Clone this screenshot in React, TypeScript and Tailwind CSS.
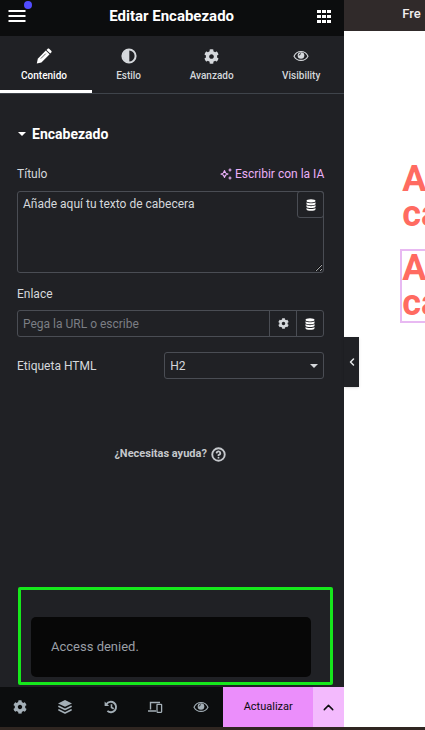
import React from 'react';
import { FaCog } from 'react-icons/fa';
import { ChevronLeft, ChevronUp, CircleHelp } from 'lucide-react';

interface IconProps {
  className?: string;
}

const DatabaseIcon: React.FC<IconProps> = ({ className }) => (
  <svg viewBox="0 0 10 12" className={className} fill="currentColor" aria-hidden="true">
    <ellipse cx="5" cy="1.8" rx="4.5" ry="1.6" />
    <path d="M.5 3.3c1.4 1.4 7.6 1.4 9 0v1.9c-1.4 1.3-7.6 1.3-9 0z" />
    <path d="M.5 6.1c1.4 1.4 7.6 1.4 9 0V8c-1.4 1.3-7.6 1.3-9 0z" />
    <path d="M.5 8.900c1.4 1.4 7.6 1.4 9 0v1.4c0 2-9 2-9 0z" />
  </svg>
);

const EyeIcon: React.FC<IconProps> = ({ className }) => (
  <svg viewBox="0 0 16 12" className={className} fill="none" stroke="currentColor" aria-hidden="true">
    <path d="M1 6.200C4 0 12 0 15 6.200 12 11.800 4 11.800 1 6.200z" strokeWidth="1.1" />
    <circle cx="8" cy="5.500" r="3.300" fill="currentColor" stroke="none" />
    <path d="M6.200 5.500A1.900 1.900 0 0 1 8 3.700" stroke="#202125" strokeWidth=".9" />
  </svg>
);

const PencilIcon: React.FC<IconProps> = ({ className }) => (
  <svg viewBox="0 0 16 16" className={className} fill="currentColor" aria-hidden="true">
    <path d="M9.800 2.500l3.800 3.800-8.200 8.200L.8 15.500l1-4.800z" />
    <path d="M10.500 1.900l1-1c.6-.6 1.300-.6 1.900 0l1.800 1.800c.6.6.6 1.300 0 1.900l-1 1z" />
    <path d="M4.800 10.600l5-5" stroke="#202125" strokeWidth=".7" fill="none" />
  </svg>
);

const ContrastIcon: React.FC<IconProps> = ({ className }) => (
  <svg viewBox="0 0 16 16" className={className} aria-hidden="true">
    <circle cx="8" cy="8" r="6.600" fill="none" stroke="currentColor" strokeWidth="2" />
    <path d="M8.300 1.500v13a6.500 6.500 0 0 1 0-13z" fill="currentColor" />
  </svg>
);

const LayersIcon: React.FC<IconProps> = ({ className }) => (
  <svg viewBox="0 0 16 14" className={className} fill="currentColor" aria-hidden="true">
    <path d="M8 0l7 3.400-7 3.400-7-3.400z" />
    <path d="M2 6.400l6 3 6-3M2 9.900l6 3 6-3" fill="none" stroke="currentColor" strokeWidth="1.700" strokeLinecap="round" strokeLinejoin="round" />
  </svg>
);

const HistoryIcon: React.FC<IconProps> = ({ className }) => (
  <svg viewBox="0 0 14 14" className={className} fill="none" stroke="currentColor" aria-hidden="true">
    <path d="M2.600 4A5.200 5.200 0 1 1 3.400 10.900" strokeWidth="1.900" />
    <path d="M7.500 4.200v3.300l2.200 1.300" strokeWidth="1.600" />
    <path d="M.6 1.600v4.300h4.500z" fill="currentColor" stroke="none" />
  </svg>
);

const DevicesIcon: React.FC<IconProps> = ({ className }) => (
  <svg viewBox="0 0 15 12" className={className} fill="none" stroke="currentColor" aria-hidden="true">
    <path d="M2.500 8.500V1.500H12M0 10h8" strokeWidth="1.400" />
    <rect x="9" y="3.300" width="4.600" height="8" rx=".5" strokeWidth="1.300" />
  </svg>
);

const CaretIcon: React.FC<IconProps> = ({ className }) => (
  <svg viewBox="0 0 8 4" className={className} fill="currentColor" aria-hidden="true">
    <path d="M0 0h8L4 4z" />
  </svg>
);

const SparkleIcon: React.FC<IconProps> = ({ className }) => (
  <svg viewBox="0 0 12 12" className={className} fill="none" stroke="currentColor" aria-hidden="true">
    <path d="M4.500 2.500c.4 2.300 1.200 3.100 3.500 3.500-2.300.4-3.100 1.200-3.500 3.500C4.100 7.200 3.300 6.400 1 6c2.300-.4 3.100-1.200 3.500-3.500z" strokeWidth="1.200" strokeLinejoin="round" />
    <path d="M10 .5v3M8.500 2h3M10 8.500v3M8.500 10h3" strokeWidth="1.200" />
  </svg>
);

const MenuIcon: React.FC<IconProps> = ({ className }) => (
  <svg viewBox="0 0 18 12" className={className} fill="currentColor" aria-hidden="true">
    <path d="M.5 0h17v2H.5zM.5 5h17v2H.5zM.5 10h17v2H.5z" />
  </svg>
);

const GridIcon: React.FC<IconProps> = ({ className }) => (
  <svg viewBox="0 0 14 13" className={className} fill="currentColor" aria-hidden="true">
    <path d="M0 0h4v3H0zM5 0h4v3H5zM10 0h4v3h-4zM0 5h4v3H0zM5 5h4v3H5zM10 5h4v3h-4zM0 10h4v3H0zM5 10h4v3H5zM10 10h4v3h-4z" />
  </svg>
);

const tabs = [
  { label: 'Contenido', icon: <PencilIcon className="size-4" />, active: true },
  { label: 'Estilo', icon: <ContrastIcon className="size-4" />, active: false },
  { label: 'Avanzado', icon: <FaCog size={15} />, active: false },
  { label: 'Visibility', icon: <EyeIcon className="w-4 h-3" />, active: false },
];

const PanelHeader = () => (
  <header className="flex items-center justify-between h-9 pb-1 pl-2 pr-[13px] bg-[#0c0d0e] text-white">
    <button aria-label="Menú" className="relative">
      <MenuIcon className="w-[18px] h-3" />
      <span className="absolute -top-[9px] left-4 size-2 rounded-full bg-[#524cff]" />
    </button>
    <h1 className="text-[15px] leading-5 font-bold">Editar Encabezado</h1>
    <button aria-label="Widgets">
      <GridIcon className="w-[14px] h-[13px]" />
    </button>
  </header>
);

const PanelTabs = () => (
  <nav className="grid grid-cols-[92fr_73fr_93fr_86fr] border-b border-[#3f444b]">
    {tabs.map((tab) => (
      <button
        key={tab.label}
        className={`flex flex-col items-center pt-3 pb-1.5 border-b-3 text-[10px] leading-4 font-medium ${
          tab.active ? 'pr-1 border-white text-white' : 'border-transparent text-[#d5d8dc]'
        }`}
      >
        <span className="flex items-center h-4 mb-1">{tab.icon}</span>
        {tab.label}
      </button>
    ))}
  </nav>
);

const Controls = () => (
  <section className="pl-[17px] pr-5 pt-7 text-[12px] leading-4 text-[#d5d8dc]">
    <button className="flex items-center gap-1.5 h-6 pl-px text-[14px] font-bold text-white">
      <CaretIcon className="w-2 h-1" />
      Encabezado
    </button>

    <div className="flex items-center justify-between h-5 mt-[18px]">
      <label htmlFor="title">Título</label>
      <button className="flex items-center gap-[3px] text-[#eab0f8]">
        <SparkleIcon className="size-3" />
        Escribir con la IA
      </button>
    </div>
    <div className="relative mt-[7px]">
      <textarea
        id="title"
        defaultValue="Añade aquí tu texto de cabecera"
        className="block w-full h-[82px] py-1 pl-[5px] pr-8 bg-transparent border border-[#4a4d54] rounded-[3px] outline-none"
      />
      <button
        aria-label="Etiquetas dinámicas"
        className="absolute top-0 right-0 flex items-center justify-center size-[27px] border border-[#4a4d54] rounded-[3px] text-white"
      >
        <DatabaseIcon className="w-2.5 h-3" />
      </button>
    </div>

    <label htmlFor="link" className="block mt-[13px]">Enlace</label>
    <div className="flex h-[27px] mt-2 border border-[#4a4d54] rounded-[3px]">
      <input
        id="link"
        type="text"
        placeholder="Pega la URL o escribe"
        className="flex-1 min-w-0 px-[5px] bg-transparent outline-none placeholder:text-[#7b7e84]"
      />
      <button aria-label="Opciones de enlace" className="flex items-center justify-center w-[27px] border-l border-[#4a4d54]">
        <FaCog size={11} />
      </button>
      <button aria-label="Etiquetas dinámicas" className="flex items-center justify-center w-[27px] border-l border-[#4a4d54] text-white">
        <DatabaseIcon className="w-2.5 h-3" />
      </button>
    </div>

    <div className="flex items-center justify-between mt-[15px]">
      <label htmlFor="tag">Etiqueta HTML</label>
      <div className="relative w-[160px]">
        <select
          id="tag"
          defaultValue="H2"
          className="appearance-none block w-full h-[27px] px-[5px] bg-transparent border border-[#4a4d54] rounded-[3px] outline-none"
        >
          <option>H1</option>
          <option>H2</option>
          <option>H3</option>
        </select>
        <CaretIcon className="absolute right-1.5 top-3 w-2 h-1 pointer-events-none" />
      </div>
    </div>
  </section>
);

const PanelFooter = () => (
  <footer className="flex h-10 bg-[#0c0d0e] text-[#a4afb7]">
    <div className="flex flex-1 items-center justify-between pl-[13px] pr-3.5">
      <button aria-label="Ajustes"><FaCog size={14} /></button>
      <button aria-label="Estructura"><LayersIcon className="w-4 h-3.5" /></button>
      <button aria-label="Historial"><HistoryIcon className="size-3.5" /></button>
      <button aria-label="Modo responsive"><DevicesIcon className="w-[15px] h-3" /></button>
      <button aria-label="Vista previa"><EyeIcon className="w-4 h-3" /></button>
    </div>
    <button className="w-[90px] bg-[#eb8efb] text-[11px] text-[#0c0d0e]">Actualizar</button>
    <button aria-label="Opciones de guardado" className="flex items-center justify-center w-[31px] bg-[#f3bafd] text-[#0c0d0e]">
      <ChevronUp size={17} />
    </button>
  </footer>
);

const Preview = () => (
  <main className="flex-1 min-w-0 overflow-hidden bg-white">
    <div className="h-[31px] pl-[58px] bg-[#302a2a] text-[13px] leading-7 font-medium text-[#f1eeee]">Fre</div>
    <div className="pl-14 pt-[131px] text-[36px] leading-[35px] font-bold text-[#ff6b61]">
      <h2 className="pl-0.5">
        A<br />ca
      </h2>
      <h2 className="mt-[17px] -mr-1 border-2 border-[#e8b9f2]">
        A<br />ca
      </h2>
    </div>
  </main>
);

export default function App() {
  return (
    <div className="flex flex-col min-h-screen font-[Roboto,sans-serif]">
      <div className="flex flex-1">
        <aside className="relative flex flex-col w-[81%] bg-[#202125]">
          <PanelHeader />
          <PanelTabs />
          <Controls />
          <a href="#ayuda" className="flex items-center justify-center gap-1 mt-[67px] pr-1 text-[11px] leading-4 font-bold text-[#c5c8cc]">
            ¿Necesitas ayuda?
            <CircleHelp size={15} strokeWidth={3} />
          </a>
          <div className="mt-auto mb-0.5 ml-[18px] mr-[11px] pt-[27px] pb-[5px] pl-2.5 pr-[19px] border-3 border-[#16e81c] rounded-xs">
            <div role="alert" className="px-5 py-5 rounded-[5px] bg-[#070707] text-[13px] leading-5 text-[#9a9fa6]">
              Access denied.
            </div>
          </div>
          <PanelFooter />
          <button
            aria-label="Ocultar panel"
            className="absolute left-full top-[337px] z-10 flex items-center justify-center w-[15px] h-[50px] bg-[#202125] text-[#e6e8ea] shadow-sm"
          >
            <ChevronLeft size={12} strokeWidth={3} />
          </button>
        </aside>
        <Preview />
      </div>
      <div className="h-[3px] bg-[#302621]" />
    </div>
  );
}
